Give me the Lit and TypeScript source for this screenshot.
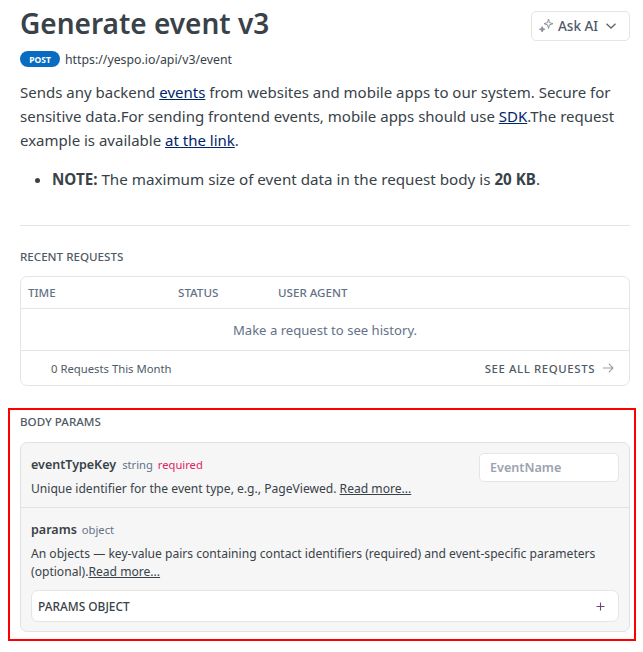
import { LitElement, html, css } from "lit";
import { customElement } from "lit/decorators.js";

@customElement("app-root")
export class AppRoot extends LitElement {
  static styles = css`
    :host { display: block; width: 643px; height: 652px; overflow: hidden; background: #fff; font-family: "Noto Sans", "Open Sans", sans-serif; color: #384248; box-sizing: border-box; }
    * { box-sizing: border-box; }
    .page { padding: 0 13px 0 20px; display: flex; flex-direction: column; }
    .head { display: flex; justify-content: space-between; align-items: flex-start; height: 51px; }
    h1 { margin: 0; font-size: 28px; line-height: 46px; font-weight: 600; color: #384248; white-space: nowrap; }
    .ask { margin-top: 11px; width: 99px; height: 30px; border: 1px solid #e5e5e5; border-radius: 5px; display: flex; align-items: center; gap: 4px; padding-left: 6px; font-size: 13.5px; font-weight: 500; color: #4f5a66; background: #fff; }
    .ask svg { display: block; flex: none; }
    .url { display: flex; align-items: center; gap: 5px; height: 16px; font-size: 12.3px; color: #384248; }
    .badge { width: 40px; height: 16px; border-radius: 8px; background: #0a6cc0; color: #fff; font-size: 8.5px; font-weight: 700; display: flex; align-items: center; justify-content: center; }
    p { margin: 0; }
    .desc { margin-top: 13px; font-size: 15px; line-height: 24px; width: 610px; }
    a { color: #00256a; text-decoration: underline; }
    ul { margin: 15px 0 0; padding-left: 32px; font-size: 15.2px; line-height: 24px; }
    b { font-weight: 700; }
    hr { margin: 34px 0 0; border: 0; border-top: 1px solid #e5e5e5; width: 610px; }
    .sec { font-size: 11.6px; font-weight: 500; color: #4f5a66; line-height: 16px; text-transform: uppercase; }
    .recent { margin-top: 23px; }
    .table { margin-top: 11px; width: 610px; height: 110px; border: 1px solid #e5e5e5; border-radius: 7px; display: flex; flex-direction: column; font-size: 11.6px; color: #4f5a66; }
    .thead { height: 32px; display: grid; grid-template-columns: 150px 100px 1fr; padding-left: 7px; align-items: center; border-bottom: 1px solid #e5e5e5; font-weight: 500; color: #637288; }
    .empty { height: 42px; display: flex; align-items: center; justify-content: center; border-bottom: 1px solid #e5e5e5; font-size: 13.1px; color: #637288; }
    .foot { flex: 1; display: flex; align-items: center; justify-content: space-between; padding: 0 15px 0 30px; }
    .count { font-size: 11.3px; color: #4f5a66; }
    .all { display: flex; align-items: center; gap: 7px; font-size: 11.4px; font-weight: 500; letter-spacing: 0.6px; color: #4f5a66; }
    .body { margin: 22px 0 0 -12px; width: 628px; height: 233px; border: 2px solid #f00; padding: 4px 5px 0 10px; }
    .card { margin-top: 12px; width: 610px; height: 190px; border: 1px solid #e2e2e2; border-radius: 7px; background: #f6f6f6; display: flex; flex-direction: column; }
    .row { padding: 11px 10px 0; }
    .row1 { height: 65px; border-bottom: 1px solid #e2e2e2; display: flex; justify-content: space-between; padding-top: 10px; }
    .row1 .title { margin-top: 1px; }
    .row1 .d { margin-top: 4px; }
    .row2 { flex: 1; padding-top: 11px; }
    .title { display: flex; align-items: baseline; gap: 5px; font-size: 11.2px; line-height: 22px; color: #637288; }
    .name { font-size: 12.5px; font-weight: 600; color: #384248; }
    .row1 .name { margin-right: 1px; }
    .d { font-size: 12.1px; line-height: 18px; color: #384248; margin-top: 4px; }
    .d a { color: #384248; }
    .req { color: #e0245e; }
    input { width: 140px; height: 29px; border: 1px solid #e5e5e5; border-radius: 5px; background: #fff; padding: 0 10px; font: 600 12.6px "Noto Sans", sans-serif; color: #384248; outline: none; }
    input::placeholder { color: #9aa3af; opacity: 1; }
    .obj { margin-top: 9px; height: 32px; border: 1px solid #e5e5e5; border-radius: 7px; background: #fff; display: flex; align-items: center; justify-content: space-between; padding: 0 13px 0 6px; font-size: 11.9px; font-weight: 500; color: #384248; }
    .plus { display: block; }
  `;

  render() {
    return html`<div class="page">
      <div class="head">
        <h1>Generate event v3</h1>
        <div class="ask">
          <svg width="16" height="16" viewBox="0 0 16 16" fill="none" stroke="#8b929c" stroke-width="1" stroke-linejoin="round">
            <path d="M10.5 1 L11.5 4.6 L15 5.7 L11.5 6.8 L10.5 10.4 L9.5 6.8 L6 5.7 L9.5 4.6 Z"/>
            <path d="M4.2 8.6 L4.9 10.6 L6.9 11.3 L4.9 12 L4.2 14 L3.5 12 L1.5 11.3 L3.5 10.6 Z" fill="#8b929c"/>
          </svg>
          <span>Ask AI</span>
          <svg style="margin-left:3px" width="12" height="12" viewBox="0 0 12 12" fill="none" stroke="#5b6570" stroke-width="1.3"><path d="M1.5 3.8 L6 8 L10.5 3.8"/></svg>
        </div>
      </div>
      <div class="url"><span class="badge">POST</span><span>https://yespo.io/api/v3/event</span></div>
      <p class="desc">Sends any backend <a>events</a> from websites and mobile apps to our system. Secure for sensitive data.For sending frontend events, mobile apps should use <a>SDK</a>.The request example is available <a>at the link</a>.</p>
      <ul><li><b>NOTE:</b> The maximum size of event data in the request body is <b>20 KB</b>.</li></ul>
      <hr />
      <div class="sec recent">Recent Requests</div>
      <div class="table">
        <div class="thead"><span>TIME</span><span>STATUS</span><span>USER AGENT</span></div>
        <div class="empty">Make a request to see history.</div>
        <div class="foot">
          <span class="count">0 Requests This Month</span>
          <span class="all">SEE ALL REQUESTS
            <svg width="12" height="12" viewBox="0 0 12 12" fill="none" stroke="#9aa0a8" stroke-width="1.1"><path d="M1 6 H11 M6.8 1.6 L11 6 L6.8 10.4"/></svg>
          </span>
        </div>
      </div>
      <div class="body">
        <div class="sec">Body Params</div>
        <div class="card">
          <div class="row row1">
            <div>
              <div class="title"><span class="name">eventTypeKey</span><span>string</span><span class="req">required</span></div>
              <p class="d">Unique identifier for the event type, e.g., PageViewed. <a>Read more...</a></p>
            </div>
            <input placeholder="EventName" />
          </div>
          <div class="row row2">
            <div class="title"><span class="name">params</span><span>object</span></div>
            <p class="d">An objects — key-value pairs containing contact identifiers (required) and event-specific parameters (optional).<a>Read more...</a></p>
            <div class="obj"><span>PARAMS OBJECT</span>
              <svg class="plus" width="9" height="9" viewBox="0 0 9 9" stroke="#6b4a7a" stroke-width="1.1"><path d="M4.5 0.5 V8.5 M0.5 4.5 H8.5"/></svg>
            </div>
          </div>
        </div>
      </div>
    </div>`;
  }
}
